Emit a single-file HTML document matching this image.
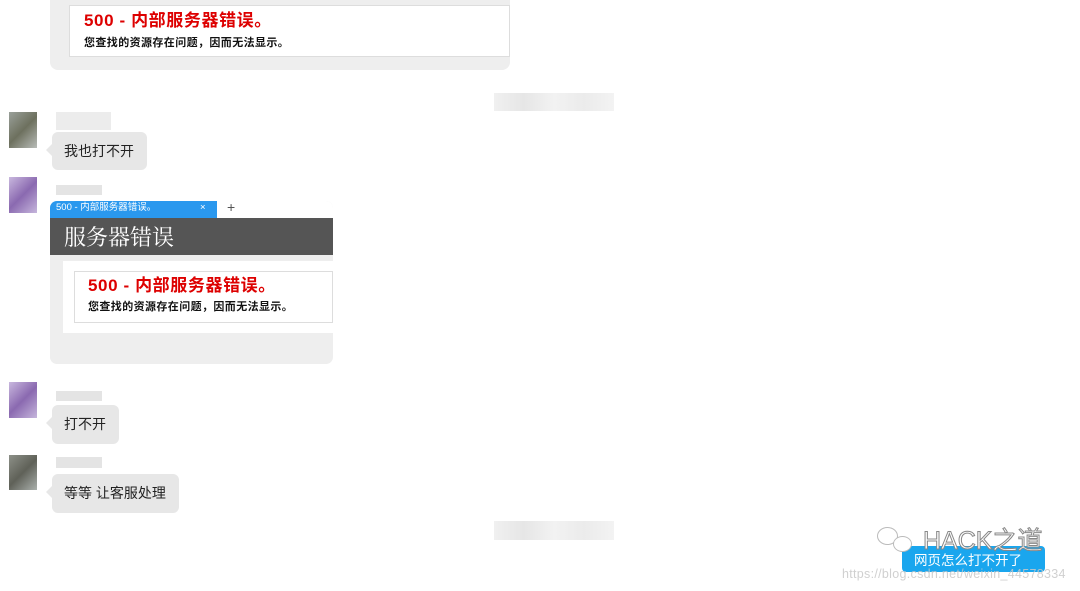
<!DOCTYPE html>
<html><head><meta charset="utf-8"><style>
*{margin:0;padding:0;box-sizing:border-box}
body{width:1080px;height:591px;background:#fff;position:relative;overflow:hidden;font-family:"Liberation Sans","Noto Sans CJK SC",sans-serif}
.a{position:absolute}
.bub{position:absolute;background:#e7e7e7;border-radius:6px;font-size:14px;color:#222;padding:0 13px 0 12px;line-height:38px}
.bub:before{content:"";position:absolute;left:-6px;top:12px;border:6px solid transparent;border-right-color:#e7e7e7;border-left:0}
.red{color:#d00;font-weight:bold;font-size:17px;letter-spacing:0.6px}
.sub{font-size:11px;font-weight:bold;color:#111;letter-spacing:0.4px}
</style></head><body>
<div class="a" style="left:50px;top:-10px;width:460px;height:80px;background:#eee;border-radius:8px"></div>
<div class="a" style="left:69px;top:5px;width:441px;height:52px;background:#fff;border:1px solid #ddd"></div>
<div class="a red" style="left:84px;top:6px">500 - 内部服务器错误。</div>
<div class="a sub" style="left:84px;top:34px">您查找的资源存在问题，因而无法显示。</div>
<div class="a" style="left:494px;top:93px;width:120px;height:18px;background:linear-gradient(90deg,#f0f0f0,#e6e6e6,#f2f2f2,#ebebeb,#f3f3f3)"></div>
<div class="a" style="left:494px;top:521px;width:120px;height:19px;background:linear-gradient(90deg,#f0f0f0,#e6e6e6,#f2f2f2,#ebebeb,#f3f3f3)"></div>
<div class="a" style="left:9px;top:112px;width:28px;height:36px;background:linear-gradient(135deg,#9aa09a,#6d705e 50%,#b8bcb8)"></div>
<div class="a" style="left:56px;top:112px;width:55px;height:18px;background:#ececec"></div>
<div class="bub" style="left:52px;top:132px;height:38px">我也打不开</div>
<div class="a" style="left:9px;top:177px;width:28px;height:36px;background:linear-gradient(135deg,#c9b8de,#8a69b0 50%,#c6b6dc)"></div>
<div class="a" style="left:56px;top:185px;width:46px;height:10px;background:#e4e4e4"></div>
<div class="a" style="left:50px;top:201px;width:283px;height:163px;background:#eee;border-radius:7px;overflow:hidden">
 <div class="a" style="left:0;top:0;width:167px;height:17px;background:#2a98ee;color:#fff;font-size:9.5px;line-height:14px;padding-left:6px">500 - 内部服务器错误。<span style="position:absolute;left:150px">×</span></div>
 <div class="a" style="left:167px;top:0;width:116px;height:17px;background:#fff;font-size:14px;line-height:12px;padding-left:10px;color:#555">+</div>
 <div class="a" style="left:0;top:17px;width:283px;height:37px;background:#555;color:#fff;font-size:22px;line-height:37px;padding-left:14px;font-family:'Noto Serif CJK SC',serif">服务器错误</div>
 <div class="a" style="left:13px;top:60px;width:270px;height:72px;background:#fff"></div>
 <div class="a" style="left:24px;top:70px;width:259px;height:52px;background:#fff;border:1px solid #ddd"></div>
 <div class="a red" style="left:38px;top:70px">500 - 内部服务器错误。</div>
 <div class="a sub" style="left:38px;top:97px">您查找的资源存在问题，因而无法显示。</div>
</div>
<div class="a" style="left:9px;top:382px;width:28px;height:36px;background:linear-gradient(135deg,#c9b8de,#8a69b0 50%,#c6b6dc)"></div>
<div class="a" style="left:56px;top:391px;width:46px;height:10px;background:#e4e4e4"></div>
<div class="bub" style="left:52px;top:405px;height:39px">打不开</div>
<div class="a" style="left:9px;top:455px;width:28px;height:35px;background:linear-gradient(135deg,#8d9088,#5f6158 50%,#aab0ac)"></div>
<div class="a" style="left:56px;top:457px;width:46px;height:11px;background:#e4e4e4"></div>
<div class="bub" style="left:52px;top:474px;height:39px">等等 让客服处理</div>
<div class="a" style="left:902px;top:546px;width:143px;height:26px;background:#1aa6ee;border-radius:4px"></div>
<div class="a" style="left:877px;top:527px;width:21px;height:18px;border:1.5px solid #bbb;border-radius:50%;background:#fff"></div>
<div class="a" style="left:893px;top:536px;width:19px;height:16px;border:1.5px solid #bbb;border-radius:50%;background:#fff"></div>
<div class="a" style="left:923px;top:527px;font-size:25px;color:#fff;-webkit-text-stroke:1px #888;line-height:28px">HACK之道</div>
<div class="a" style="left:914px;top:553px;font-size:13.5px;color:#fff;line-height:16px">网页怎么打不开了</div>
<div class="a" style="left:842px;top:566px;font-size:12.5px;color:rgba(200,200,200,0.85);line-height:16px;letter-spacing:0.3px">https://blog.csdn.net/weixin_44578334</div>
</body></html>
